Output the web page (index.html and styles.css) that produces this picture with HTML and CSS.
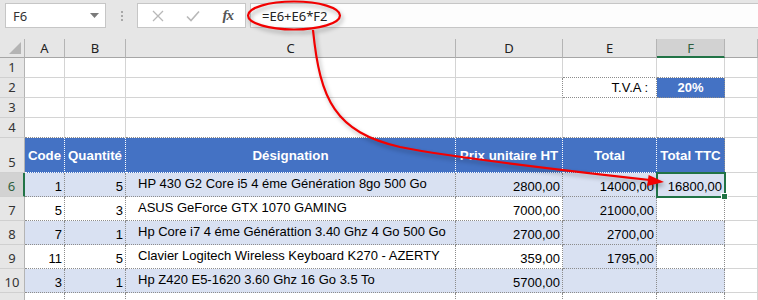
FILE: index.html
```html
<!DOCTYPE html>
<html lang="fr">
<head>
<meta charset="UTF-8" />
<title>Facture - Excel</title>
<link rel="stylesheet" href="styles.css">
</head>
<body>
  <div class="app">
    <!-- barre de formule -->
    <div class="fbar">
      <div class="namebox">
        <span>F6</span>
        <svg class="caret" width="9" height="5" viewBox="0 0 9 5"><path d="M0 0 H9 L4.5 5 Z" fill="#7a7a7a"/></svg>
      </div>
      <div class="grip"><i></i><i></i><i></i></div>
      <div class="fxbox">
        <svg width="12" height="12" viewBox="0 0 12 12"><path d="M1 1 L11 11 M11 1 L1 11" stroke="#b8b8b8" stroke-width="1.3"/></svg>
        <svg width="14" height="12" viewBox="0 0 14 12"><path d="M1 6.5 L5 10.5 L13 1.5" stroke="#b8b8b8" stroke-width="1.6" fill="none"/></svg>
        <span class="fx">fx</span>
      </div>
      <div class="formula">=E6+E6*F2</div>
    </div>

    <!-- feuille -->
    <div class="sheet">
      <div class="ch corner"></div>
      <div class="ch">A</div>
      <div class="ch">B</div>
      <div class="ch">C</div>
      <div class="ch">D</div>
      <div class="ch">E</div>
      <div class="ch sel-col">F</div>
      <div class="ch"></div>

      <div class="rh">1</div>
      <div class="c"></div><div class="c"></div><div class="c"></div><div class="c"></div>
      <div class="c dot-b"></div><div class="c dot-b"></div><div class="c"></div>

      <div class="rh">2</div>
      <div class="c"></div><div class="c"></div><div class="c"></div><div class="c dot-r"></div>
      <div class="c t tva">T.V.A :</div>
      <div class="c t blue tx">20%</div>
      <div class="c"></div>

      <div class="rh">3</div>
      <div class="c"></div><div class="c"></div><div class="c"></div><div class="c"></div>
      <div class="c"></div><div class="c"></div><div class="c"></div>

      <div class="rh">4</div>
      <div class="c dot-b"></div><div class="c dot-b"></div><div class="c dot-b"></div><div class="c dot-b"></div>
      <div class="c dot-b"></div><div class="c dot-b"></div><div class="c"></div>

      <div class="rh">5</div>
      <div class="c hd">Code</div>
      <div class="c hd">Quantité</div>
      <div class="c hd">Désignation</div>
      <div class="c hd">Prix unitaire HT</div>
      <div class="c hd">Total</div>
      <div class="c hd last">Total TTC</div>
      <div class="c"></div>

      <div class="rh sel-row">6</div>
      <div class="c t band num">1</div>
      <div class="c t band num">5</div>
      <div class="c t band txt">HP 430 G2 Core i5 4 éme Génération 8go 500 Go</div>
      <div class="c t band num">2800,00</div>
      <div class="c t band num">14000,00</div>
      <div class="c t band num active">16800,00</div>
      <div class="c"></div>

      <div class="rh">7</div>
      <div class="c t num">5</div>
      <div class="c t num">3</div>
      <div class="c t txt">ASUS GeForce GTX 1070 GAMING</div>
      <div class="c t num">7000,00</div>
      <div class="c t band num">21000,00</div>
      <div class="c t num"></div>
      <div class="c"></div>

      <div class="rh">8</div>
      <div class="c t band num">7</div>
      <div class="c t band num">1</div>
      <div class="c t band txt">Hp Core i7 4 éme Générattion 3.40 Ghz 4 Go 500 Go</div>
      <div class="c t band num">2700,00</div>
      <div class="c t band num">2700,00</div>
      <div class="c t band num"></div>
      <div class="c"></div>

      <div class="rh">9</div>
      <div class="c t num">11</div>
      <div class="c t num">5</div>
      <div class="c t txt">Clavier Logitech Wireless Keyboard K270 - AZERTY</div>
      <div class="c t num">359,00</div>
      <div class="c t band num">1795,00</div>
      <div class="c t num"></div>
      <div class="c"></div>

      <div class="rh">10</div>
      <div class="c t band num">3</div>
      <div class="c t band num">1</div>
      <div class="c t band txt">Hp Z420 E5-1620 3.60 Ghz 16 Go 3.5 To</div>
      <div class="c t band num">5700,00</div>
      <div class="c t band num"></div>
      <div class="c t band num"></div>
      <div class="c"></div>

      <div class="rh"></div>
      <div class="c t"></div><div class="c t"></div><div class="c t"></div><div class="c t"></div>
      <div class="c t"></div><div class="c t"></div><div class="c"></div>
    </div>

    <!-- annotation : cercle + flèche -->
    <svg class="annot" width="758" height="300" viewBox="0 0 758 300">
      <g class="red">
        <ellipse cx="294" cy="15.5" rx="46" ry="14" fill="none" stroke="#f20000" stroke-width="2.2"/>
        <path d="M313 30 C320 100 335 132 400 147 C455 158 560 170 650 180" fill="none" stroke="#f20000" stroke-width="2.2"/>
        <path d="M664 182 L648.6 175 L647.2 186 Z" fill="#f20000"/>
      </g>
    </svg>
  </div>
</body>
</html>
```

FILE: styles.css
```css
/* base */
body {
  margin: 0;
  background: #fff;
  font-family: "Liberation Sans", Arial, sans-serif;
}

.app {
  position: relative;
  width: 758px;
  height: 300px;
  overflow: hidden;
}

/* barre de formule */
.fbar {
  display: flex;
  align-items: flex-start;
  height: 39px;
  padding: 3px 0 0 5px;
  box-sizing: border-box;
  background: #e6e6e6;
  font-family: "Noto Sans", sans-serif;
  font-size: 13px;
  color: #333;
}

.namebox {
  display: flex;
  align-items: center;
  justify-content: space-between;
  width: 101px;
  height: 25px;
  padding: 0 6px 0 7px;
  box-sizing: border-box;
  background: #fff;
  border: 1px solid #c6c6c6;
}

.grip {
  display: flex;
  flex-direction: column;
  gap: 2px;
  width: 31px;
  align-items: center;
  padding-top: 8px;
}
.grip i {
  width: 2px;
  height: 2px;
  background: #a8a8a8;
}

.fxbox {
  display: flex;
  align-items: center;
  justify-content: space-between;
  width: 109px;
  height: 25px;
  padding: 0 12px 0 14px;
  box-sizing: border-box;
  background: #fff;
  border: 1px solid #c6c6c6;
}
.fx {
  font-family: "Liberation Serif", serif;
  font-style: italic;
  font-weight: bold;
  font-size: 15px;
  color: #555;
  letter-spacing: -1px;
}

.formula {
  flex: 1;
  height: 25px;
  margin-left: 4px;
  padding-left: 11px;
  line-height: 24px;
  box-sizing: border-box;
  background: #fdfdfd;
  border: 1px solid #c6c6c6;
  border-right: none;
  color: #222;
}

/* feuille */
.sheet {
  display: grid;
  grid-template-columns: 25px 40px 61px 330px 107px 94px 68px 33px;
  grid-template-rows: 19px 20px 20px 20px 20px 35px 24px 24px 24px 24px 24px 20px;
  font-size: 13px;
}

.c {
  display: flex;
  align-items: flex-end;
  box-sizing: border-box;
  border-right: 1px solid #d4d4d4;
  border-bottom: 1px solid #d4d4d4;
  padding: 0 2px 2px;
  white-space: nowrap;
  overflow: hidden;
  color: #000;
}

.ch {
  display: flex;
  align-items: center;
  justify-content: center;
  box-sizing: border-box;
  background: #e6e6e6;
  border-right: 1px solid #b4b4b4;
  border-bottom: 1px solid #a6a6a6;
  font-family: "Noto Sans", sans-serif;
  font-size: 13px;
  color: #222;
}
.corner {
  position: relative;
}
.corner::after {
  content: "";
  position: absolute;
  right: 3px;
  bottom: 3px;
  border-style: solid;
  border-width: 0 0 12px 12px;
  border-color: transparent transparent #b4b4b4 transparent;
}
.sel-col {
  background: #d2d2d2;
  border-bottom: 2px solid #217346;
  color: #2f5f40;
}

.rh {
  display: flex;
  align-items: flex-end;
  justify-content: center;
  box-sizing: border-box;
  background: #e6e6e6;
  border-right: 1px solid #b4b4b4;
  border-bottom: 1px solid #d0d0d0;
  padding-bottom: 1px;
  font-family: "Noto Sans", sans-serif;
  font-size: 13px;
  color: #333;
}
.sel-row {
  background: #d2d2d2;
  border-right: 2px solid #217346;
  color: #2f5f40;
}

/* bordures pointillées du tableau */
.t {
  border-right: 1px dotted #8c8c8c;
  border-bottom: 1px dotted #8c8c8c;
}
.dot-b {
  border-bottom: 1px dotted #8c8c8c;
}
.dot-r {
  border-right: 1px dotted #8c8c8c;
}

.band {
  background: #d9e1f2;
}
.blue {
  background: #4472c4;
}

.hd {
  align-items: center;
  justify-content: center;
  padding: 0 2px;
  background: #4472c4;
  color: #fff;
  font-weight: bold;
  font-size: 13.3px;
  border-right: 1px dotted #fff;
  border-bottom: 1px dotted #fff;
}
.hd.last {
  border-right: 1px dotted #8c8c8c;
}

.num {
  justify-content: flex-end;
}
.txt {
  padding: 0 0 5px 12px;
}
.tva {
  align-items: center;
  justify-content: flex-end;
  padding: 0 8px 0 0;
}
.tx {
  align-items: center;
  justify-content: center;
  padding: 0;
  color: #fff;
  font-weight: bold;
}

/* cellule active */
.active {
  position: relative;
  outline: 2px solid #217346;
  outline-offset: -1px;
  overflow: visible;
}
.active::after {
  content: "";
  position: absolute;
  right: -4px;
  bottom: -4px;
  width: 5px;
  height: 5px;
  background: #217346;
  border: 1px solid #fff;
}

/* annotation */
.annot {
  position: absolute;
  top: 0;
  left: 0;
  pointer-events: none;
}
.red {
  filter: drop-shadow(2px 3px 2px rgba(0, 0, 0, 0.3));
}
```
